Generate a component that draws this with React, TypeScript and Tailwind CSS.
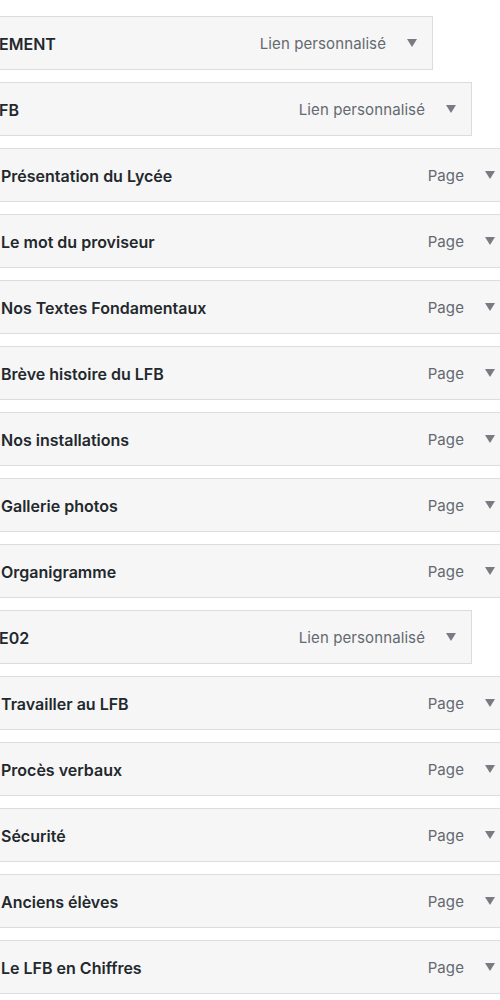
import React from 'react'

type Item = { title: string; type: string; depth: number }

const items: Item[] = [
  { title: 'EMENT', type: 'Lien personnalisé', depth: 0 },
  { title: 'FB', type: 'Lien personnalisé', depth: 1 },
  { title: 'Présentation du Lycée', type: 'Page', depth: 2 },
  { title: 'Le mot du proviseur', type: 'Page', depth: 2 },
  { title: 'Nos Textes Fondamentaux', type: 'Page', depth: 2 },
  { title: 'Brève histoire du LFB', type: 'Page', depth: 2 },
  { title: 'Nos installations', type: 'Page', depth: 2 },
  { title: 'Gallerie photos', type: 'Page', depth: 2 },
  { title: 'Organigramme', type: 'Page', depth: 2 },
  { title: 'E02', type: 'Lien personnalisé', depth: 1 },
  { title: 'Travailler au LFB', type: 'Page', depth: 2 },
  { title: 'Procès verbaux', type: 'Page', depth: 2 },
  { title: 'Sécurité', type: 'Page', depth: 2 },
  { title: 'Anciens élèves', type: 'Page', depth: 2 },
  { title: 'Le LFB en Chiffres', type: 'Page', depth: 2 },
]

const depthClass = ['mr-[67px]', 'mr-[28px]', '-mr-[11px]']

function Arrow() {
  return (
    <svg width="10" height="8" viewBox="0 0 10 8" className="shrink-0">
      <path d="M0 0 L10 0 L5 8 Z" fill="#787c82" />
    </svg>
  )
}

function MenuItem({ item }: { item: Item }) {
  return (
    <div
      className={`-ml-px flex h-[54px] items-center border border-[#dcdcde] bg-[#f6f6f6] pl-px pr-[15px] ${depthClass[item.depth]}`}
    >
      <span
        className={`flex-1 truncate pt-px text-[16px] font-semibold text-[#23282d] ${item.depth === 2 ? '' : '-ml-[2px]'}`}
      >
        {item.title}
      </span>
      <span className="mr-[21px] pt-[3px] text-[15px] tracking-[0.1px] text-[#646970]">{item.type}</span>
      <Arrow />
    </div>
  )
}

export default function App() {
  return (
    <div
      className="h-[1000px] w-[500px] overflow-hidden bg-white pt-4"
      style={{ fontFamily: 'Inter, "Liberation Sans", sans-serif' }}
    >
      <div className="flex flex-col gap-3">
        {items.map((item, i) => (
          <MenuItem key={i} item={item} />
        ))}
      </div>
    </div>
  )
}
